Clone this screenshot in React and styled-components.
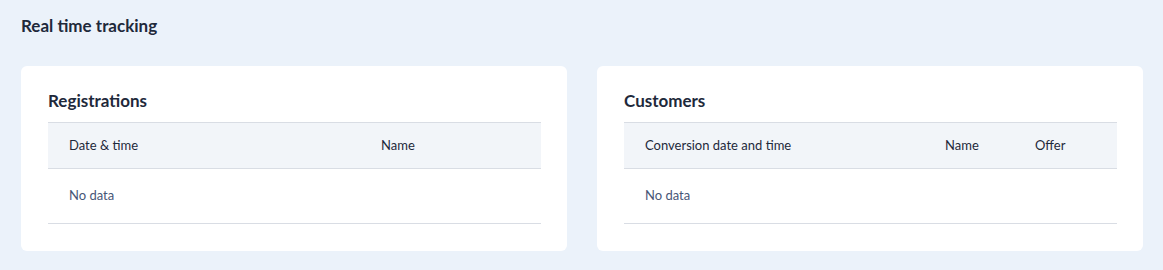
import React from "react";
import styled, { createGlobalStyle } from "styled-components";

const GlobalStyle = createGlobalStyle`
body {
    margin: 0;
    background-color: #ebf2fa;
    font-family: Lato, "Noto Sans", sans-serif;
    color: #1e293b;
}
`;

const Page = styled.div`
padding: 16px 20px 20px 21px;
`;

const PageTitle = styled.h1`
margin: 0;
font-size: 17px;
font-weight: 700;
line-height: 20px;
`;

const Panels = styled.div`
display: grid;
grid-template-columns: 1fr 1fr;
gap: 30px;
margin-top: 30px;
`;

const Card = styled.section`
background-color: #ffffff;
border-radius: 6px;
padding: 25px 26px 27px 27px;
`;

const CardTitle = styled.h2`
margin: 0 0 11px 0;
font-size: 17px;
font-weight: 700;
line-height: 20px;
`;

const Row = styled.div`
display: grid;
grid-template-columns: ${(props) => props.$columns};
background-color: ${(props) => (props.$head ? "#f2f5f9" : "#ffffff")};
border-top: ${(props) => (props.$head ? "1px solid #d9dde4" : "none")};
border-bottom: 1px solid #d9dde4;
height: ${(props) => (props.$head ? "45px" : "54px")};
align-items: center;
`;

const Cell = styled.div`
padding: 0 21px 2px 21px;
font-size: 13px;
color: ${(props) => (props.$muted ? "#475677" : "#1e293b")};
white-space: nowrap;
`;

function Table(props) {
    return (
        <div>
            <Row $head $columns={props.columns}>
                {props.headers.map((h) => (
                    <Cell key={h}>{h}</Cell>
                ))}
            </Row>
            <Row $columns="1fr">
                <Cell $muted>No data</Cell>
            </Row>
        </div>
    );
}

function App() {
    return (
        <Page>
            <GlobalStyle />
            <PageTitle>Real time tracking</PageTitle>
            <Panels>
                <Card>
                    <CardTitle>Registrations</CardTitle>
                    <Table columns="312px 1fr" headers={["Date & time", "Name"]} />
                </Card>
                <Card>
                    <CardTitle>Customers</CardTitle>
                    <Table
                        columns="300px 90px 1fr"
                        headers={["Conversion date and time", "Name", "Offer"]}
                    />
                </Card>
            </Panels>
        </Page>
    );
}

export default App;
